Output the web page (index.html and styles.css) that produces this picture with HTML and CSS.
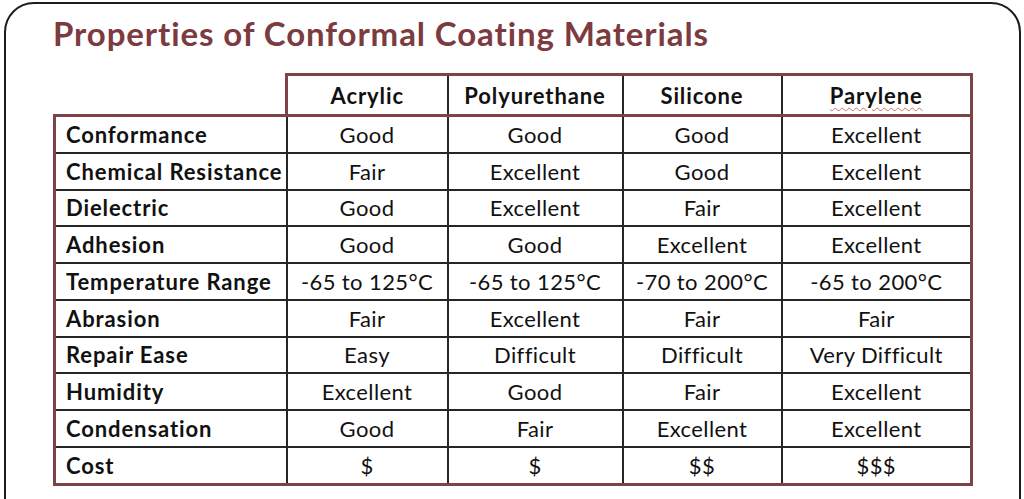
FILE: index.html
```html
<!DOCTYPE html>
<html lang="en">
<head>
<meta charset="utf-8">
<title>Properties of Conformal Coating Materials</title>
<link rel="stylesheet" href="styles.css">
</head>
<body>
<div class="card">
  <h1 class="title">Properties of Conformal Coating Materials</h1>
  <table class="props">
    <colgroup>
      <col class="c-label">
      <col class="c-acr">
      <col class="c-poly">
      <col class="c-sil">
      <col class="c-par">
    </colgroup>
    <thead>
      <tr class="head">
        <th class="corner"></th>
        <th>Acrylic</th>
        <th>Polyurethane</th>
        <th>Silicone</th>
        <th><span class="spell">Parylene</span></th>
      </tr>
    </thead>
    <tbody>
      <tr><th>Conformance</th><td>Good</td><td>Good</td><td>Good</td><td>Excellent</td></tr>
      <tr><th>Chemical Resistance</th><td>Fair</td><td>Excellent</td><td>Good</td><td>Excellent</td></tr>
      <tr><th>Dielectric</th><td>Good</td><td>Excellent</td><td>Fair</td><td>Excellent</td></tr>
      <tr><th>Adhesion</th><td>Good</td><td>Good</td><td>Excellent</td><td>Excellent</td></tr>
      <tr><th>Temperature Range</th><td>-65 to 125°C</td><td>-65 to 125°C</td><td>-70 to 200°C</td><td>-65 to 200°C</td></tr>
      <tr><th>Abrasion</th><td>Fair</td><td>Excellent</td><td>Fair</td><td>Fair</td></tr>
      <tr><th>Repair Ease</th><td>Easy</td><td>Difficult</td><td>Difficult</td><td>Very Difficult</td></tr>
      <tr><th>Humidity</th><td>Excellent</td><td>Good</td><td>Fair</td><td>Excellent</td></tr>
      <tr><th>Condensation</th><td>Good</td><td>Fair</td><td>Excellent</td><td>Excellent</td></tr>
      <tr><th>Cost</th><td>$</td><td>$</td><td>$$</td><td>$$$</td></tr>
    </tbody>
  </table>
</div>
</body>
</html>
```

FILE: styles.css
```css
html, body {
  margin: 0;
  padding: 0;
  background: #ffffff;
  overflow: hidden;
}

body {
  font-family: Lato, "Liberation Sans", sans-serif;
  color: #111111;
}

.card {
  margin: 2px 3px 0 4px;
  height: 540px;
  border: 2px solid #1c1c1c;
  border-radius: 30px 30px 0 0;
  padding: 9px 0 0 47px;
  box-sizing: border-box;
}

.title {
  margin: 0;
  font-size: 33px;
  line-height: 40px;
  font-weight: 700;
  color: #7b3b40;
  letter-spacing: 0.9px;
}

.props {
  margin-top: 20px;
  border-collapse: collapse;
  table-layout: fixed;
  width: 919px;
  font-size: 22px;
}

.c-label { width: 232px; }
.c-acr { width: 161px; }
.c-poly { width: 175px; }
.c-sil { width: 159px; }
.c-par { width: 190px; }

.props th,
.props td {
  border: 2px solid #262626;
  padding: 0;
  height: 34.75px;
  vertical-align: middle;
  white-space: nowrap;
}

.props td {
  text-align: center;
  font-weight: 400;
  letter-spacing: 0.4px;
}

.props th {
  letter-spacing: 0.9px;
}

.props tbody th {
  text-align: left;
  font-weight: 700;
  padding-left: 10px;
  border-left: 3px solid #7d4448;
}

.props tbody td:last-child {
  border-right: 3px solid #7d4448;
}

.props tbody tr:first-child th,
.props tbody tr:first-child td {
  border-top: 3px solid #7d4448;
}

.props tbody tr:last-child th,
.props tbody tr:last-child td {
  border-bottom: 3px solid #7d4448;
}

.head th {
  height: 38px;
  font-weight: 700;
  text-align: center;
  border-top: 3px solid #7d4448;
}

.head th:nth-child(2) {
  border-left: 3px solid #7d4448;
}

.head th:last-child {
  border-right: 3px solid #7d4448;
}

.head th.corner {
  border: none;
}

.spell {
  text-decoration: underline wavy rgba(190, 70, 60, 0.75);
  text-decoration-thickness: 1px;
  text-underline-offset: 3px;
}
```
